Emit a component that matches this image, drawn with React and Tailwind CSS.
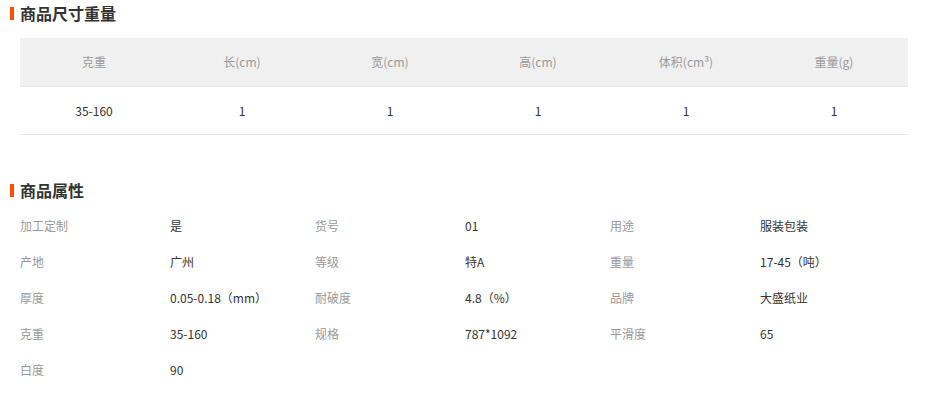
import React from 'react';

const font = { fontFamily: '"Noto Sans CJK SC", "Liberation Sans", sans-serif' };

const sizeHeaders = ['克重', '长(cm)', '宽(cm)', '高(cm)', '体积(cm³)', '重量(g)'];
const sizeValues = ['35-160', '1', '1', '1', '1', '1'];

const attrs = [
  ['加工定制', '是'],
  ['货号', '01'],
  ['用途', '服装包装'],
  ['产地', '广州'],
  ['等级', '特A'],
  ['重量', '17-45（吨）'],
  ['厚度', '0.05-0.18（mm）'],
  ['耐破度', '4.8（%）'],
  ['品牌', '大盛纸业'],
  ['克重', '35-160'],
  ['规格', '787*1092'],
  ['平滑度', '65'],
  ['白度', '90'],
];

function SectionTitle({ children }) {
  return (
    <div className="flex h-[26px] items-center pl-[10px]">
      <span className="mr-[6px] h-[13px] w-[4px] bg-[#ff5000]" />
      <span className="text-[16px] font-bold leading-none text-[#333]">{children}</span>
    </div>
  );
}

export default function App() {
  return (
    <div className="h-[394px] w-[944px] overflow-hidden bg-white" style={font}>
      <SectionTitle>商品尺寸重量</SectionTitle>

      {/* size / weight table */}
      <div className="ml-[20px] mt-[12px] w-[888px] text-[12px]">
        <div className="grid h-[49px] grid-cols-6 border-b border-[#e8e8e8] bg-[#f0f0f0] text-[#999]">
          {sizeHeaders.map((h) => (
            <div key={h} className="flex items-center justify-center">{h}</div>
          ))}
        </div>
        <div className="grid h-[48px] grid-cols-6 border-b border-[#e8e8e8] text-[#333]">
          {sizeValues.map((v, i) => (
            <div key={i} className="flex items-center justify-center">{v}</div>
          ))}
        </div>
      </div>

      <div className="mt-[42px]">
        <SectionTitle>商品属性</SectionTitle>
      </div>

      {/* attributes */}
      <div className="ml-[20px] mt-[5px] grid w-[885px] grid-cols-3 text-[12px]">
        {attrs.map(([label, value], i) => (
          <div key={i} className="flex h-[36px] items-center">
            <span className="w-[150px] text-[#999]">{label}</span>
            <span className="text-[#333]">{value}</span>
          </div>
        ))}
      </div>
    </div>
  );
}
